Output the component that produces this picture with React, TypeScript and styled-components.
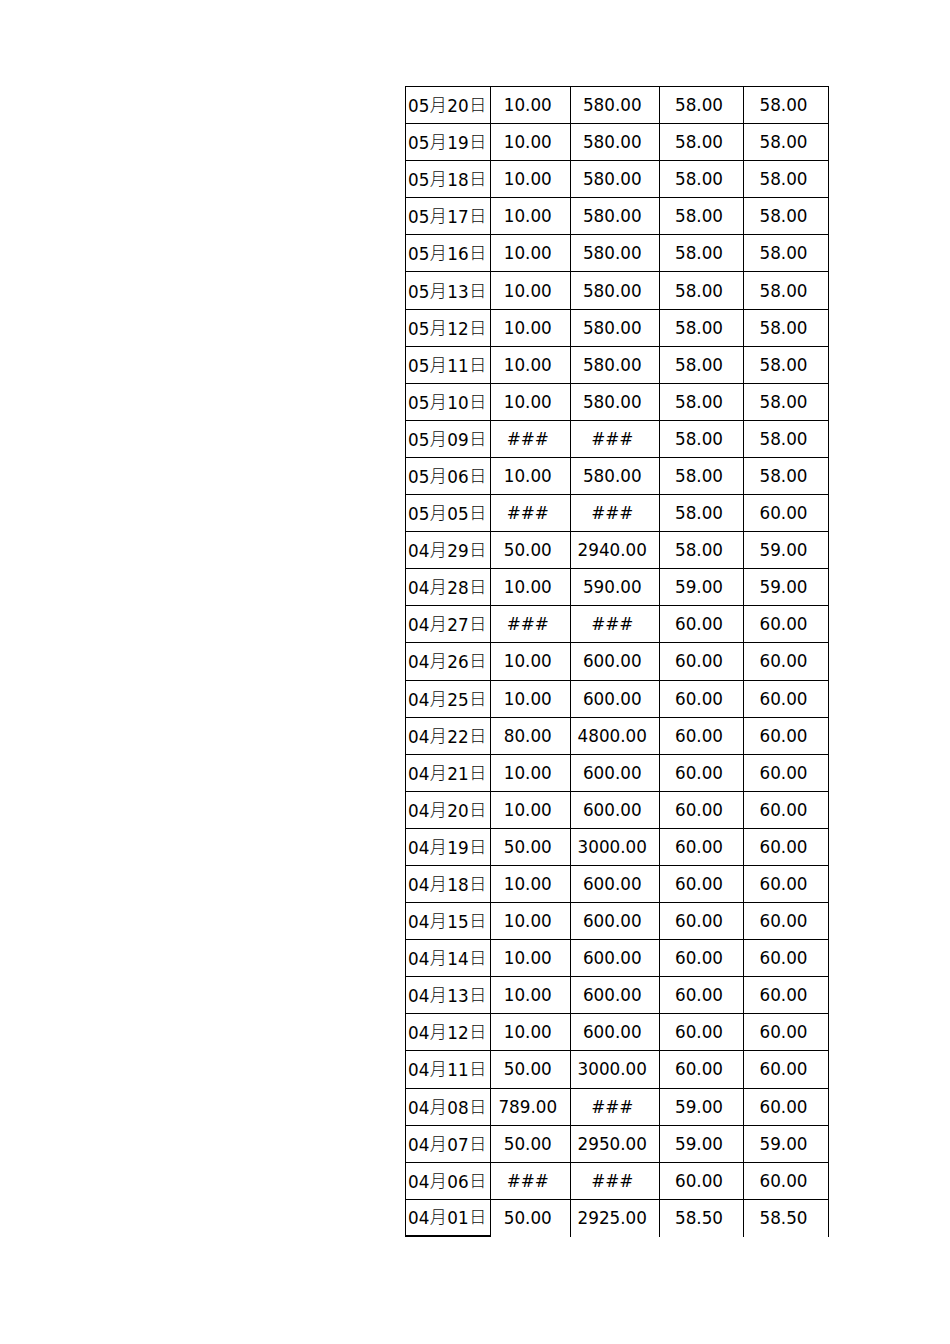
import React from 'react'
import styled, { createGlobalStyle } from 'styled-components'

const rows: [string, string, string, string, string][] = [
  ['05月20日', '10.00', '580.00', '58.00', '58.00'],
  ['05月19日', '10.00', '580.00', '58.00', '58.00'],
  ['05月18日', '10.00', '580.00', '58.00', '58.00'],
  ['05月17日', '10.00', '580.00', '58.00', '58.00'],
  ['05月16日', '10.00', '580.00', '58.00', '58.00'],
  ['05月13日', '10.00', '580.00', '58.00', '58.00'],
  ['05月12日', '10.00', '580.00', '58.00', '58.00'],
  ['05月11日', '10.00', '580.00', '58.00', '58.00'],
  ['05月10日', '10.00', '580.00', '58.00', '58.00'],
  ['05月09日', '###', '###', '58.00', '58.00'],
  ['05月06日', '10.00', '580.00', '58.00', '58.00'],
  ['05月05日', '###', '###', '58.00', '60.00'],
  ['04月29日', '50.00', '2940.00', '58.00', '59.00'],
  ['04月28日', '10.00', '590.00', '59.00', '59.00'],
  ['04月27日', '###', '###', '60.00', '60.00'],
  ['04月26日', '10.00', '600.00', '60.00', '60.00'],
  ['04月25日', '10.00', '600.00', '60.00', '60.00'],
  ['04月22日', '80.00', '4800.00', '60.00', '60.00'],
  ['04月21日', '10.00', '600.00', '60.00', '60.00'],
  ['04月20日', '10.00', '600.00', '60.00', '60.00'],
  ['04月19日', '50.00', '3000.00', '60.00', '60.00'],
  ['04月18日', '10.00', '600.00', '60.00', '60.00'],
  ['04月15日', '10.00', '600.00', '60.00', '60.00'],
  ['04月14日', '10.00', '600.00', '60.00', '60.00'],
  ['04月13日', '10.00', '600.00', '60.00', '60.00'],
  ['04月12日', '10.00', '600.00', '60.00', '60.00'],
  ['04月11日', '50.00', '3000.00', '60.00', '60.00'],
  ['04月08日', '789.00', '###', '59.00', '60.00'],
  ['04月07日', '50.00', '2950.00', '59.00', '59.00'],
  ['04月06日', '###', '###', '60.00', '60.00'],
  ['04月01日', '50.00', '2925.00', '58.50', '58.50'],
]

const GlobalStyle = createGlobalStyle`
  html, body {
    margin: 0;
    padding: 0;
    background: #fff;
  }
  body {
    font-family: "DejaVu Sans", "Noto Sans CJK SC", sans-serif;
    color: #000;
  }
`

const Page = styled.div`
  width: 950px;
  height: 1344px;
  padding: 86px 0 0 405px;
  box-sizing: border-box;
`

const Sheet = styled.div`
  display: grid;
  grid-template-columns: 86px 79.5px 89.5px 84px 85px;
  grid-auto-rows: 37.1px;
  border-top: 1px solid #000;
  width: max-content;
`

const Cell = styled.div<{ $first?: boolean; $last?: boolean }>`
  box-sizing: border-box;
  display: flex;
  align-items: center;
  justify-content: ${(p) => (p.$first ? 'flex-start' : 'center')};
  padding: ${(p) => (p.$first ? '0 0 0 2px' : '0 5px 0 0')};
  border-right: 1px solid #000;
  border-left: ${(p) => (p.$first ? '1px solid #000' : 'none')};
  border-bottom: ${(p) =>
    p.$last ? (p.$first ? '2px solid #000' : 'none') : '1px solid #000'};
  font-size: 16.8px;
  line-height: 20px;
  white-space: nowrap;
  overflow: hidden;
`

const Han = styled.span`
  display: inline-block;
  width: 18px;
  text-align: center;
  font-family: "Noto Sans CJK JP", "Noto Sans CJK SC", sans-serif;
  font-weight: 300;
  font-size: 17px;
  line-height: 20px;
  vertical-align: 1px;
  color: #111;
`

function DateText({ value }: { value: string }) {
  const parts = value.split(/([月日])/).filter(Boolean)
  return (
    <span>
      {parts.map((p, k) =>
        p === '月' || p === '日' ? <Han key={k}>{p}</Han> : <span key={k}>{p}</span>
      )}
    </span>
  )
}

export default function App() {
  return (
    <Page>
      <GlobalStyle />
      <Sheet>
        {rows.map((r, i) =>
          r.map((v, j) => (
            <Cell key={`${i}-${j}`} $first={j === 0} $last={i === rows.length - 1}>
              {j === 0 ? <DateText value={v} /> : v}
            </Cell>
          ))
        )}
      </Sheet>
    </Page>
  )
}
